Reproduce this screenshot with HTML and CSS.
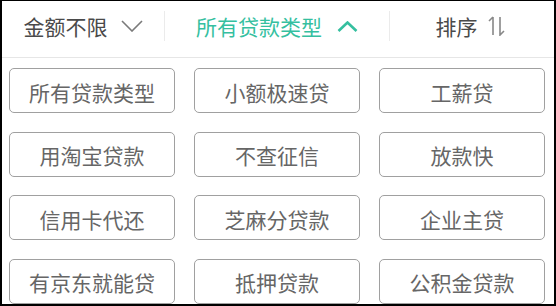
FILE: index.html
```html
<!DOCTYPE html>
<html lang="zh-CN">

<head>
    <meta charset="UTF-8">
    <meta name="viewport" content="width=device-width, initial-scale=1.0">
    <title>贷款筛选</title>
    <link rel="stylesheet" href="styles.css">
</head>

<body>
    <div class="panel">
        <header class="filter-bar">
            <div class="filter-item">
                <span>金额不限</span>
                <svg class="chevron" width="22" height="12" viewBox="0 0 22 12">
                    <path d="M1 1 L11 11 L21 1" fill="none" stroke="#7a7a7a" stroke-width="1.6" />
                </svg>
            </div>
            <div class="filter-item active">
                <span>所有贷款类型</span>
                <svg class="chevron" width="21" height="11" viewBox="0 0 21 11">
                    <path d="M1.5 10 L10.5 1.5 L19.5 10" fill="none" stroke="#35bf9f" stroke-width="2.6" />
                </svg>
            </div>
            <div class="filter-item sort">
                <span>排序</span>
                <svg class="sort-icon" width="24" height="20" viewBox="0 0 24 20">
                    <path d="M8 1 V19 M8 1 L4 5" fill="none" stroke="#888" stroke-width="1.6" />
                    <path d="M15 1 V19 L19 15" fill="none" stroke="#888" stroke-width="1.6" />
                </svg>
            </div>
        </header>

        <div class="type-grid">
            <div class="type-btn">所有贷款类型</div>
            <div class="type-btn">小额极速贷</div>
            <div class="type-btn">工薪贷</div>
            <div class="type-btn">用淘宝贷款</div>
            <div class="type-btn">不查征信</div>
            <div class="type-btn">放款快</div>
            <div class="type-btn">信用卡代还</div>
            <div class="type-btn">芝麻分贷款</div>
            <div class="type-btn">企业主贷</div>
            <div class="type-btn">有京东就能贷</div>
            <div class="type-btn">抵押贷款</div>
            <div class="type-btn">公积金贷款</div>
        </div>
    </div>
</body>

</html>
```

FILE: styles.css
```css
body {
    margin: 0;
    padding: 0;
    font-family: "Noto Sans CJK SC", "Noto Sans", sans-serif;
    background: #000;
    overflow: hidden;
}

.panel {
    width: 556px;
    height: 306px;
    box-sizing: border-box;
    border: 2px solid #000;
    border-top-width: 1px;
    background: #fff;
    overflow: hidden;
}

.filter-bar {
    display: grid;
    grid-template-columns: 163px 225px 1fr;
    align-items: center;
    height: 50px;
    padding-bottom: 6px;
    border-bottom: 1px solid #e6e6e6;
}

.filter-item {
    display: flex;
    justify-content: center;
    align-items: center;
    gap: 13px;
    height: 30px;
    font-size: 21px;
    color: #4a4a4a;
    border-right: 1px solid #ebebeb;
}

.filter-item span {
    line-height: 1;
}

.filter-item.active {
    color: #35bf9f;
    gap: 15px;
}

.filter-item.sort {
    border-right: none;
    gap: 7px;
}

.type-grid {
    display: grid;
    grid-template-columns: repeat(3, 166px);
    grid-auto-rows: 45px;
    column-gap: 19px;
    row-gap: 18.5px;
    padding: 10px 8px 0 7px;
}

.type-btn {
    display: flex;
    justify-content: center;
    align-items: center;
    border: 1.5px solid #a0a0a0;
    border-radius: 5px;
    font-size: 21px;
    color: #666;
    padding-top: 2px;
    box-sizing: border-box;
}
```
